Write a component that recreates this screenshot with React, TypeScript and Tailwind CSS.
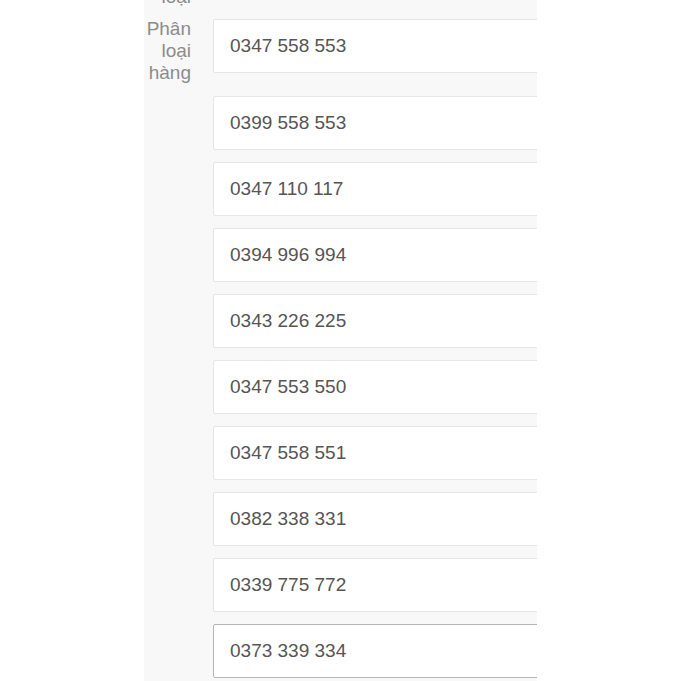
import React from "react";

const phones = [
  "0399 558 553",
  "0347 110 117",
  "0394 996 994",
  "0343 226 225",
  "0347 553 550",
  "0347 558 551",
  "0382 338 331",
  "0339 775 772",
  "0373 339 334",
];

export default function App() {
  return (
    <div
      className="w-[681px] h-[681px] bg-white overflow-hidden flex"
      style={{ fontFamily: '"Liberation Sans", Arial, sans-serif' }}
    >
      <div className="ml-[144px] w-[393px] h-[681px] bg-[#f8f8f8] overflow-hidden flex flex-col">
        <div className="-mt-[14px] w-[47px] text-right text-[19px] leading-[22px] text-[#8c8c8c]">loại</div>
        <div className="mt-[11px] flex">
          <div className="w-[47px] -mt-[1px] text-right text-[19px] leading-[22px] text-[#8c8c8c] shrink-0">
            Phân<br />loại<br />hàng
          </div>
          <div className="ml-[22px] flex flex-col">
            <div className="w-[400px] h-[54px] shrink-0 bg-white border border-[#e5e5e5] rounded-[2px] flex items-center pl-[16px] text-[19px] text-[#555]">
              0347 558 553
            </div>
            <div className="mt-[23px] flex flex-col gap-[12px]">
              {phones.map((p, i) => (
                <div
                  key={p}
                  className={
                    i === phones.length - 1
                      ? "w-[400px] h-[54px] shrink-0 bg-white border border-[#b5b5b5] rounded-[2px] flex items-center pl-[16px] text-[19px] text-[#555]"
                      : "w-[400px] h-[54px] shrink-0 bg-white border border-[#e5e5e5] rounded-[2px] flex items-center pl-[16px] text-[19px] text-[#555]"
                  }
                >
                  {p}
                </div>
              ))}
            </div>
          </div>
        </div>
      </div>
    </div>
  );
}
